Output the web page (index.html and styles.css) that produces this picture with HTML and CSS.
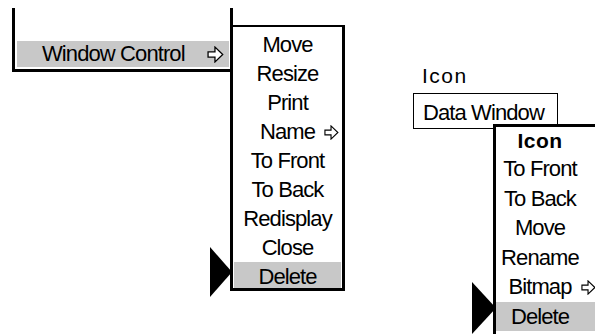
FILE: index.html
```html
<!DOCTYPE html>
<html>
<head>
  <meta charset="UTF-8">
  <title>Menus</title>
  <link rel="stylesheet" href="styles.css">
</head>
<body>
  <div class="canvas">
    <div class="frame">
      <div class="bar">
        <span>Window Control</span>
        <svg class="arrow" width="17" height="17" viewBox="0 0 16 16"><polygon points="1,5.5 7.5,5.5 7.5,1 14.8,8 7.5,15 7.5,10.5 1,10.5"/></svg>
      </div>
    </div>

    <ul class="menu menu-window">
      <li>Move</li>
      <li>Resize</li>
      <li>Print</li>
      <li>Name<svg class="sub" width="15" height="15" viewBox="0 0 16 16"><polygon points="1,5.5 7.5,5.5 7.5,1 14.8,8 7.5,15 7.5,10.5 1,10.5"/></svg></li>
      <li>To Front</li>
      <li>To Back</li>
      <li>Redisplay</li>
      <li>Close</li>
      <li class="selected">Delete</li>
    </ul>
    <div class="pointer pointer-left"></div>

    <div class="icon-label">Icon</div>
    <div class="data-window">Data Window</div>

    <ul class="menu menu-icon">
      <li class="title">Icon</li>
      <li>To Front</li>
      <li>To Back</li>
      <li>Move</li>
      <li>Rename</li>
      <li>Bitmap<svg class="sub" width="15" height="15" viewBox="0 0 16 16"><polygon points="1,5.5 7.5,5.5 7.5,1 14.8,8 7.5,15 7.5,10.5 1,10.5"/></svg></li>
      <li class="selected">Delete</li>
    </ul>
    <div class="pointer pointer-right"></div>
  </div>
</body>
</html>
```

FILE: styles.css
```css
body{
  margin:0;
  background:#fff;
  color:#000;
  overflow:hidden;
  font-family:"Liberation Sans", Arial, sans-serif;
  font-size:22px;
  letter-spacing:-0.9px;
}
.canvas{
  position:relative;
  width:595px;
  height:334px;
  overflow:hidden;
}
svg polygon{
  fill:#fff;
  stroke:#000;
  stroke-width:1.2;
}

/* window with the control bar */
.frame{
  position:absolute;
  left:12px;
  top:8px;
  width:221px;
  height:64px;
  box-sizing:border-box;
  border:3px solid #000;
  border-top:none;
  padding:0 1px 2px 2px;
  display:flex;
  flex-direction:column;
  justify-content:flex-end;
}
.bar{
  height:26px;
  background:#c8c8c8;
  display:flex;
  align-items:center;
  justify-content:space-between;
  padding:0 5px 0 25px;
  line-height:26px;
  white-space:nowrap;
}

/* menus */
.menu{
  position:absolute;
  margin:0;
  list-style:none;
  background:#fff;
  box-sizing:border-box;
}
.menu li{
  line-height:29px;
  height:29px;
  text-align:center;
  white-space:nowrap;
}
.menu .selected{
  background:#c8c8c8;
}
.sub{
  margin-left:9px;
  margin-right:-24px;
  vertical-align:-1px;
}
.menu-window{
  left:230px;
  top:25px;
  width:115px;
  border-style:solid;
  border-color:#000;
  border-width:2px 3px 3px 3px;
  padding:3px 1px 0 1px;
}
.menu-window .selected{
  height:26px;
}
.menu-icon{
  left:493px;
  top:124px;
  width:140px;
  height:240px;
  border-left:3px solid #000;
  border-top:3px solid #000;
  padding:0;
}
.menu-icon li{
  line-height:29.5px;
  height:29.5px;
  padding-right:49px;
}
.menu-icon .title{
  height:27px;
  line-height:27px;
  font-size:21px;
  font-weight:bold;
  letter-spacing:0.5px;
}

/* labels */
.icon-label{
  position:absolute;
  left:422px;
  top:66px;
  font-size:21px;
  line-height:20px;
  letter-spacing:1.5px;
}
.data-window{
  position:absolute;
  left:413px;
  top:93px;
  width:145px;
  height:36px;
  box-sizing:border-box;
  border:1px solid #000;
  padding:3px 0 0 9px;
  line-height:32px;
  white-space:nowrap;
}

/* selection pointers */
.pointer{
  position:absolute;
  width:0;
  height:0;
  border-top:25px solid transparent;
  border-bottom:25px solid transparent;
  border-left:22px solid #000;
}
.pointer-left{
  left:210px;
  top:247px;
}
.pointer-right{
  left:472px;
  top:282px;
  border-left-width:24px;
  border-top-width:26px;
  border-bottom-width:26px;
}
```
